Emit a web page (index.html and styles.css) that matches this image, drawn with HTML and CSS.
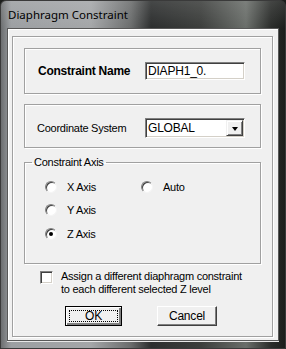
FILE: index.html
```html
<!DOCTYPE html>
<html lang="en">
<head>
    <meta charset="UTF-8">
    <title>Diaphragm Constraint</title>
    <link rel="stylesheet" href="styles.css">
</head>
<body>
    <div class="window">
        <div class="titlebar">Diaphragm Constraint</div>
        <div class="client">
            <div class="panel">
                <div class="group name-group">
                    <span class="bold-label">Constraint Name</span>
                    <div class="edit">DIAPH1_0.</div>
                </div>
                <div class="group coord-group">
                    <span class="label">Coordinate System</span>
                    <div class="combo">
                        <span class="combo-text">GLOBAL</span>
                        <span class="combo-btn"><span class="arrow"></span></span>
                    </div>
                </div>
                <fieldset class="axis-group">
                    <legend>Constraint Axis</legend>
                    <div class="radio-grid">
                        <label class="radio"><span class="dot"></span>X Axis</label>
                        <label class="radio"><span class="dot"></span>Auto</label>
                        <label class="radio"><span class="dot"></span>Y Axis</label>
                        <span></span>
                        <label class="radio"><span class="dot checked"></span>Z Axis</label>
                    </div>
                </fieldset>
                <div class="check-row">
                    <span class="box"></span>
                    <span class="check-text">Assign a different diaphragm constraint<br>to each different selected Z level</span>
                </div>
                <div class="buttons">
                    <button class="btn default"><span class="focus">OK</span></button>
                    <button class="btn cancel">Cancel</button>
                </div>
            </div>
        </div>
    </div>
</body>
</html>
```

FILE: styles.css
```css
body {
    margin: 0;
    background: #1c1e1c;
    font-family: 'Liberation Sans', Arial, sans-serif;
    font-size: 11px;
    letter-spacing: -0.25px;
    color: #000;
}

.window {
    width: 286px;
    height: 349px;
    box-sizing: border-box;
    border-radius: 6px 6px 0 0;
    background:
        linear-gradient(180deg, rgba(255,255,255,0.12) 0, rgba(0,0,0,0) 28px),
        linear-gradient(90deg, #6c6e70 0, #9c9fa2 10px, #a4a6a8 90px, #6a6c6c 130px, #2c2e2e 150px, #3c3e3c 200px, #6a6e6a 245px, #2a2c2a 270px, #1a1c1a 286px);
    border: 1px solid #3a3a3a;
    display: flex;
    flex-direction: column;
}

.titlebar {
    height: 27px;
    padding-left: 7px;
    line-height: 27px;
    font-family: 'Noto Sans', 'Open Sans', sans-serif;
    font-size: 11.5px;
    letter-spacing: 0;
    color: #000;
}

.client {
    margin: 0 6px;
    height: 313px;
    box-sizing: border-box;
    background: #f0f0f0;
    border: 1px solid #585858;
    box-shadow: inset 1px 1px #fff, 0 1px #e8e8e8;
    padding: 7px 4px 0 4px;
}

.panel {
    width: 261px;
    height: 301px;
    box-sizing: border-box;
    border: 1px solid #a0a0a0;
    box-shadow: 1px 1px #fff, inset 1px 1px #fff;
    padding: 11px 11px 0 11px;
}

.group {
    display: flex;
    align-items: center;
    justify-content: space-between;
    box-sizing: border-box;
    width: 237px;
    border: 1px solid #a0a0a0;
    box-shadow: 1px 1px #fff, inset 1px 1px #fff;
}

.name-group {
    height: 46px;
    padding: 0 15px 0 13px;
}

.coord-group {
    height: 44px;
    margin-top: 10px;
    padding: 4px 15px 0 12px;
}

.bold-label {
    font-size: 12px;
    font-weight: bold;
}

.edit, .combo {
    width: 100px;
    box-sizing: border-box;
    background: #fff;
    border: 1px solid;
    border-color: #808080 #fff #fff #808080;
    box-shadow: inset 1px 1px #404040, inset -1px -1px #d4d0c8;
}

.edit {
    height: 18px;
    line-height: 16px;
    padding-left: 2px;
    font-size: 12px;
    letter-spacing: -0.2px;
}

.combo {
    height: 20px;
    display: flex;
    align-items: center;
    justify-content: space-between;
    padding: 0 1px 0 2px;
}

.combo-text {
    font-size: 12px;
    letter-spacing: -0.2px;
}

.combo-btn {
    width: 17px;
    height: 16px;
    box-sizing: border-box;
    background: #f0f0f0;
    border: 1px solid;
    border-color: #f0f0f0 #404040 #404040 #f0f0f0;
    box-shadow: inset 1px 1px #fff, inset -1px -1px #808080;
    display: flex;
    align-items: center;
    justify-content: center;
}

.arrow {
    width: 0;
    height: 0;
    border-left: 3.5px solid transparent;
    border-right: 3.5px solid transparent;
    border-top: 4px solid #000;
    margin-top: 1px;
}

.axis-group {
    width: 237px;
    height: 108px;
    box-sizing: border-box;
    margin: 8px 0 0 0;
    padding: 0 0 0 7px;
    border: 1px solid #a0a0a0;
    box-shadow: 1px 1px #fff, inset 1px 1px #fff;
}

.axis-group legend {
    padding: 0 2px;
    line-height: 13px;
    font-size: 11px;
}

.radio-grid {
    display: grid;
    grid-template-columns: 96px 80px;
    grid-auto-rows: 23.5px;
    margin: 6px 0 0 13px;
}

.radio {
    display: flex;
    align-items: center;
    gap: 10px;
}

.dot {
    width: 12px;
    height: 12px;
    box-sizing: border-box;
    border-radius: 50%;
    background: #fff;
    border: 1px solid;
    border-color: #808080 #f4f4f4 #f4f4f4 #808080;
    box-shadow: inset 1px 1px #404040;
    position: relative;
}

.dot.checked::after {
    content: '';
    position: absolute;
    left: 3px;
    top: 3px;
    width: 4px;
    height: 4px;
    border-radius: 50%;
    background: #000;
}

.check-row {
    display: flex;
    align-items: flex-start;
    gap: 8px;
    margin: 6px 0 0 16px;
    line-height: 13px;
}

.box {
    width: 13px;
    height: 13px;
    flex: none;
    box-sizing: border-box;
    background: #fff;
    border: 1px solid;
    border-color: #808080 #fff #fff #808080;
    box-shadow: inset 1px 1px #404040, inset -1px -1px #d4d0c8;
    margin-top: 1px;
}

.buttons {
    display: flex;
    gap: 35px;
    margin: 10px 0 0 41px;
}

.btn {
    height: 20px;
    box-sizing: border-box;
    padding: 0;
    font-family: 'Liberation Sans', Arial, sans-serif;
    font-size: 12px;
    letter-spacing: -0.2px;
    color: #000;
    background: #f0f0f0;
    border: 1px solid;
    border-color: #fff #404040 #404040 #fff;
    box-shadow: inset -1px -1px #808080;
}

.btn.default {
    width: 57px;
    border: 1px solid #000;
    box-shadow: inset 1px 1px #fff, inset -2px -2px #808080;
    padding: 3px;
}

.focus {
    display: flex;
    align-items: center;
    justify-content: center;
    height: 100%;
    box-sizing: border-box;
    border: 1px dotted #000;
}

.btn.cancel {
    width: 60px;
}
```
